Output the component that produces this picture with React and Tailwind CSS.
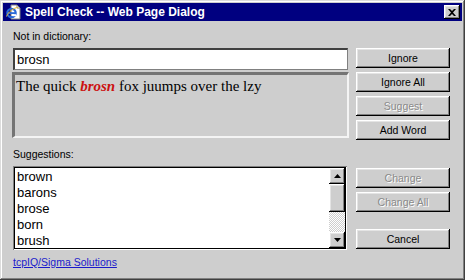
import React from "react";

const btnRaised =
  "shadow-[inset_-1px_-1px_#000000,inset_1px_1px_#ffffff,inset_-2px_-2px_#808080,inset_2px_2px_#e4e4e4]";

function Button({ children, disabled, className = "" }) {
  return (
    <div
      className={`h-[20px] w-[94px] flex items-center justify-center bg-[#cecece] text-[10.5px] leading-[13px] ${btnRaised} ${
        disabled ? "text-[#8a8a8a] [text-shadow:1px_1px_0_#ffffff]" : "text-black"
      } ${className}`}
    >
      {children}
    </div>
  );
}

function IEIcon() {
  return (
    <svg width="16" height="16" viewBox="0 0 16 16">
      <path d="M6 1h6l3 3v11H6z" fill="#ffffff" stroke="#808080" strokeWidth="1" />
      <path d="M12 1v3h3" fill="none" stroke="#808080" strokeWidth="1" />
      <circle cx="6.5" cy="9" r="4.2" fill="none" stroke="#2a6ad8" strokeWidth="2.2" />
      <rect x="3" y="8.2" width="7.5" height="1.8" fill="#2a6ad8" />
      <rect x="7.5" y="10.2" width="3.5" height="2" fill="#ffffff" />
      <path d="M1.5 12.5C3 8 9 3.5 13 3.5" fill="none" stroke="#e8b830" strokeWidth="1" />
    </svg>
  );
}

export default function App() {
  const items = ["brown", "barons", "brose", "born", "brush"];
  return (
    <div className="w-[465px] h-[280px] bg-[#cecece] p-[3px] flex flex-col font-['Liberation_Sans',Arial,sans-serif] shadow-[inset_-1px_-1px_#404040,inset_1px_1px_#dcdcdc,inset_-2px_-2px_#808080,inset_2px_2px_#ffffff]">
      {/* Title bar */}
      <div className="h-[18px] bg-[#000080] flex items-center pl-[2px] pr-[2px] shrink-0">
        <IEIcon />
        <span className="ml-[4px] text-white font-bold text-[12px] leading-[14px] whitespace-nowrap">
          Spell Check -- Web Page Dialog
        </span>
        <div
          className={`ml-auto w-[16px] h-[14px] bg-[#cecece] flex items-center justify-center ${btnRaised}`}
        >
          <svg width="8" height="7" viewBox="0 0 8 7">
            <path d="M0 0h2l2 2 2-2h2L5 3.5 8 7H6L4 5 2 7H0l3-3.5z" fill="#000" />
          </svg>
        </div>
      </div>

      {/* Body */}
      <div className="flex pl-[9px] pt-[9px]">
        {/* Left column */}
        <div className="w-[337px] flex flex-col">
          <div className="h-[13px] leading-[13px] text-[10.5px] text-black pl-[1px]">Not in dictionary:</div>
          <div className="mt-[5px] mx-[1px] h-[22px] bg-white border-t-2 border-l-2 border-t-[#404040] border-l-[#404040] border-b border-r border-b-[#808080] border-r-[#808080] flex items-center pl-[2px] text-[13px] leading-[15px] text-black">
            brosn
          </div>
          <div className="mt-[2px] h-[66px] border-t-[3px] border-l-[3px] border-t-[#747474] border-l-[#747474] border-b-2 border-r-2 border-b-[#f4f4f4] border-r-[#f4f4f4] pl-[1px] pt-[2px] font-['Liberation_Serif','Times_New_Roman',serif] text-[15px] leading-[18px] text-black whitespace-nowrap">
            The quick <b className="italic text-[#cc1111]">brosn</b> fox juumps over the lzy
          </div>
          <div className="mt-[10px] h-[13px] leading-[13px] text-[10.5px] text-black pl-[1px]">Suggestions:</div>
          <div className="mt-[5px] ml-[1px] mr-[2px] h-[84px] shadow-[inset_1px_1px_#808080,inset_-1px_-1px_#ffffff] p-[1px]">
            <div className="h-full border border-black bg-white flex">
              <div className="flex-1 pl-[2px] pt-[1px] text-[13px] leading-[16px] text-black">
                {items.map((w) => (
                  <div key={w}>{w}</div>
                ))}
              </div>
              <div className="w-[16px] flex flex-col">
                <div className={`h-[16px] bg-[#cecece] flex items-center justify-center ${btnRaised}`}>
                  <svg width="7" height="4" viewBox="0 0 7 4">
                    <path d="M3.5 0L7 4H0z" fill="#000" />
                  </svg>
                </div>
                <div className={`h-[28px] bg-[#cecece] ${btnRaised}`} />
                <div className="flex-1 bg-[repeating-conic-gradient(#ffffff_0%_25%,#cecece_0%_50%)] bg-[length:2px_2px]" />
                <div className={`h-[16px] bg-[#cecece] flex items-center justify-center ${btnRaised}`}>
                  <svg width="7" height="4" viewBox="0 0 7 4">
                    <path d="M0 0h7L3.5 4z" fill="#000" />
                  </svg>
                </div>
              </div>
            </div>
          </div>
          <div className="mt-[6px] pl-[1px] text-[10.5px] leading-[13px]">
            <span className="text-[#1a1acc] underline">tcpIQ/Sigma Solutions</span>
          </div>
        </div>

        {/* Right column */}
        <div className="ml-[7px] w-[94px] flex flex-col pt-[18px]">
          <Button>Ignore</Button>
          <Button className="mt-[4px]">Ignore All</Button>
          <Button className="mt-[4px]" disabled>Suggest</Button>
          <Button className="mt-[4px]">Add Word</Button>
          <Button className="mt-[28px]" disabled>Change</Button>
          <Button className="mt-[4px]" disabled>Change All</Button>
          <Button className="mt-[17px]">Cancel</Button>
        </div>
      </div>
    </div>
  );
}
